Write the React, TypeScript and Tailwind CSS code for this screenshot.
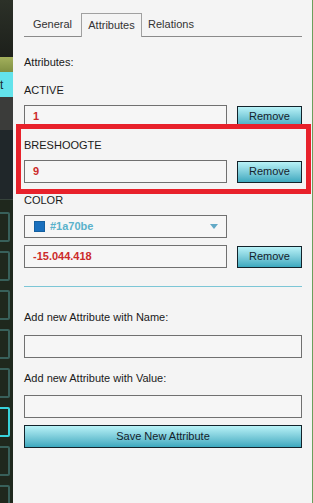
import React from "react";

const sideBoxes = [0, 1, 2, 3, 4, 5, 6, 7];

function ValueRow({ value }: { value: string }) {
  return (
    <div className="flex items-center gap-[10px]">
      <div className="h-[23px] w-[203px] border border-[#707070] bg-[#f6f6f6] pl-[8px] flex items-center text-[11px] font-bold text-[#cc2a2a]">
        {value}
      </div>
      <RemoveButton />
    </div>
  );
}

function RemoveButton() {
  return (
    <button
      type="button"
      className="h-[22px] w-[65px] border border-[#13232b] bg-gradient-to-b from-[#b8f2f7] to-[#3ba9bf] text-[11px] text-[#14222c] flex items-center justify-center"
    >
      Remove
    </button>
  );
}

export default function App() {
  return (
    <div
      className="relative flex w-[313px] h-[503px] overflow-hidden bg-[#f4f4f4]"
      style={{ fontFamily: '"Liberation Sans", Arial, sans-serif' }}
    >
      {/* cut-off sidebar on the left */}
      <div className="w-[13px] shrink-0 h-full flex flex-col overflow-hidden bg-[#1f281d]">
        <div className="h-[57px] shrink-0 bg-gradient-to-b from-[#2c3128] to-[#1d201b]" />
        <div className="h-[15px] shrink-0 bg-gradient-to-b from-[#a3b05c] to-[#7f8f42]" />
        <div className="h-[25px] shrink-0 bg-[#63e3eb] flex items-center pl-[0px] text-[12px] leading-[12px] text-[#1a2a30]">
          t
        </div>
        <div className="h-[33px] shrink-0 bg-[#3b3c3a]" />
        <div className="h-[70px] shrink-0 bg-[#20272a] border-b border-[#36433b]" />
        <div className="flex flex-col gap-[9px] pt-[12px] shrink-0">
          {sideBoxes.map((i) => (
            <div
              key={`sb-${i}`}
              className={
                i === 5
                  ? "shrink-0 ml-[-4px] w-[14px] h-[30px] border-2 border-[#38d2da] rounded-[2px]"
                  : "shrink-0 ml-[-4px] w-[14px] h-[30px] border-2 border-[#38605a] rounded-[2px]"
              }
            />
          ))}
        </div>
      </div>

      {/* panel */}
      <div className="w-[300px] h-full border-r border-[#6b9f5c] bg-[#f4f4f4] pl-[11px] pr-[10px] pt-[13px] flex flex-col text-[#1a1a1a]">
        <div className="flex shrink-0 h-[24px] border-b border-[#8a8a8a] text-[11px] text-[#333]">
          <div className="w-[57px] flex items-center justify-center">General</div>
          <div className="w-[61px] h-[24px] flex items-center justify-center border border-b-0 border-[#a0a0a0] bg-[#f4f4f4]">
            Attributes
          </div>
          <div className="w-[58px] flex items-center justify-center">Relations</div>
        </div>

        <div className="mt-[18px] h-[14px] leading-[14px] text-[11px]">Attributes:</div>

        <div className="mt-[14px] h-[14px] leading-[14px] text-[11px]">ACTIVE</div>
        <div className="mt-[8px]">
          <ValueRow value="1" />
        </div>

        <div className="mt-[10px] h-[14px] leading-[14px] text-[11px]">BRESHOOGTE</div>
        <div className="mt-[8px]">
          <ValueRow value="9" />
        </div>

        <div className="mt-[10px] h-[14px] leading-[14px] text-[11px]">COLOR</div>
        <div className="mt-[8px] h-[23px] w-[203px] border border-[#707070] bg-[#f6f6f6] pl-[9px] pr-[8px] flex items-center gap-[5px]">
          <span className="w-[11px] h-[11px] bg-[#1a70be] border border-[#15609f]" />
          <span className="text-[11px] font-bold text-[#5ab2cb]">#1a70be</span>
          <span className="ml-auto w-0 h-0 border-l-[4px] border-r-[4px] border-t-[5px] border-l-transparent border-r-transparent border-t-[#62a9c6]" />
        </div>
        <div className="mt-[7px]">
          <ValueRow value="-15.044.418" />
        </div>

        <div className="mt-[18px] h-px bg-[#7cc6d6]" />

        <div className="mt-[23px] h-[14px] leading-[14px] text-[11px]">Add new Attribute with Name:</div>
        <div className="mt-[11px] h-[23px] border border-[#707070] bg-[#f6f6f6]" />

        <div className="mt-[13px] h-[14px] leading-[14px] text-[11px]">Add new Attribute with Value:</div>
        <div className="mt-[10px] h-[23px] border border-[#707070] bg-[#f6f6f6]" />

        <button
          type="button"
          className="mt-[7px] h-[23px] border border-[#13232b] bg-gradient-to-b from-[#b8f2f7] to-[#3ba9bf] text-[11px] text-[#14222c] flex items-center justify-center"
        >
          Save New Attribute
        </button>
      </div>

      {/* red highlight annotation */}
      <div className="absolute left-[16px] top-[124px] w-[295px] h-[70px] border-[5px] border-[#e8212b]" />
    </div>
  );
}
